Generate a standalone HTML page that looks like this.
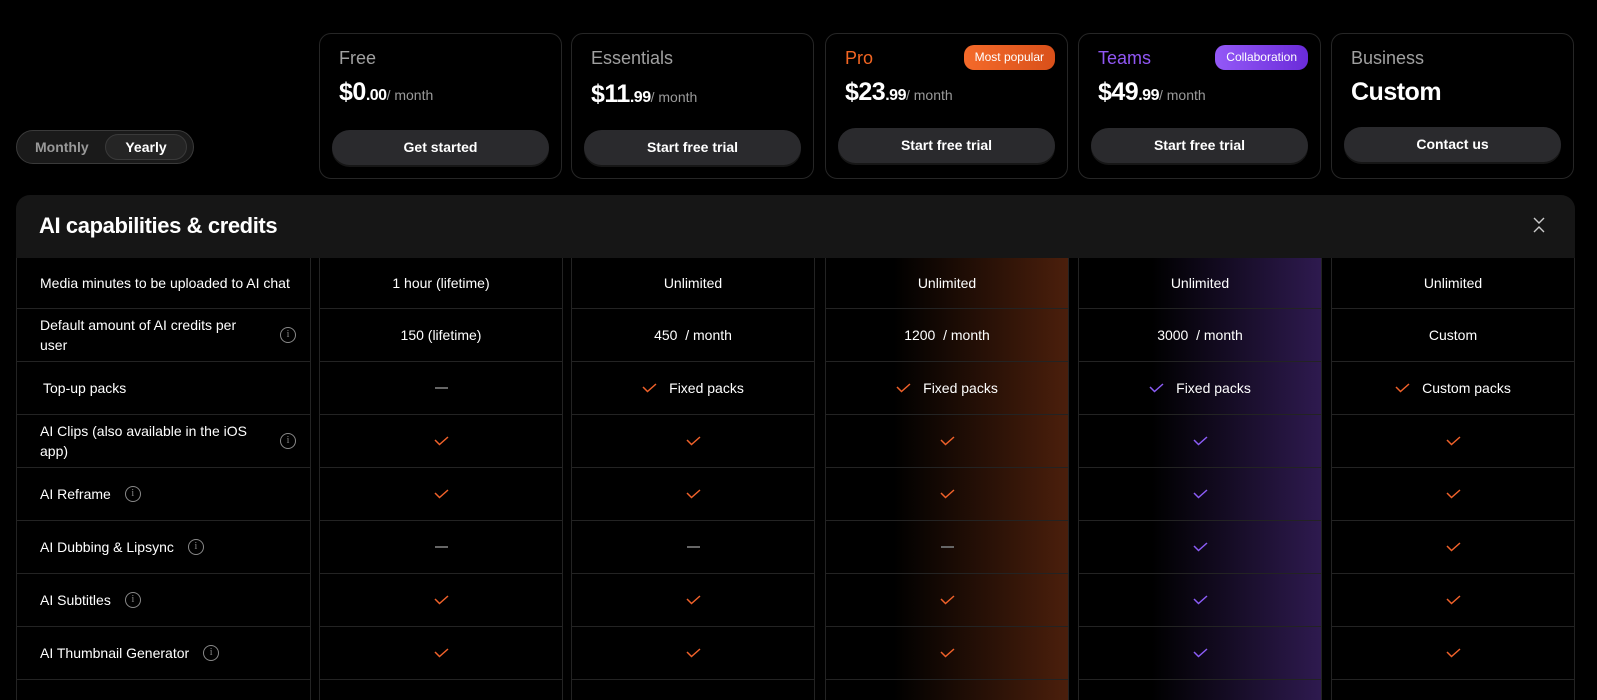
<!DOCTYPE html>
<html><head><meta charset="utf-8"><style>
*{box-sizing:border-box;margin:0;padding:0}
body{width:1597px;height:700px;background:#000;overflow:hidden;font-family:"Liberation Sans",sans-serif;color:#fff;position:relative}
.card{position:absolute;top:33px;width:243px;height:146px;border:1px solid #262626;border-radius:12px;background:#000}
.nm{position:absolute;left:19px;top:14px;font-size:18px;color:#a0a0a0}
.pr{position:absolute;left:19px;top:44px;font-size:25px;font-weight:bold;letter-spacing:-0.5px}
.pr small{font-size:16px}
.pr span{font-size:14px;font-weight:normal;color:#9a9a9a;letter-spacing:0}
.btn{position:absolute;left:12px;right:12px;top:96px;height:35px;border-radius:18px;background:#2a2a2d;font-size:14px;font-weight:bold;text-align:center;line-height:35px;box-shadow:0 2px 0 #161616}
.badge{position:absolute;right:12px;top:11px;height:25px;border-radius:10px;font-size:12px;padding:0 11px;line-height:25px}
.toggle{position:absolute;left:16px;top:130px;width:178px;height:34px;border:1px solid #3a3a3a;border-radius:17px;background:#1a1a1a}
.toggle .m{position:absolute;left:18px;top:8px;font-size:14px;color:#999;font-weight:bold}
.toggle .y{position:absolute;left:88px;top:3px;width:82px;height:26px;border:1px solid #3a3a3a;border-radius:14px;background:#252525;font-size:14px;font-weight:bold;text-align:center;line-height:24px}
.sec{position:absolute;left:16px;top:195px;width:1559px;height:63px;background:#161616;border-radius:14px 14px 0 0}
.sec h2{position:absolute;left:23px;top:18px;font-size:22px;font-weight:bold;letter-spacing:-0.4px}
.col{position:absolute;top:258px;height:442px;border-left:1px solid #232323;border-right:1px solid #232323}
.cell{position:absolute;left:0;right:0;border-bottom:1px solid #232323;display:flex;align-items:center;justify-content:center;font-size:14px}
.lab .cell{justify-content:flex-start;padding-left:23px;padding-right:14px}
.info{display:inline-block;width:16px;height:16px;border:1.3px solid #888;border-radius:50%;font-size:10px;color:#888;text-align:center;line-height:13px;font-family:"Liberation Serif",serif;margin-left:14px;flex:none}
.sp{margin-left:auto}
.dash{width:13px;height:1.5px;background:#666}
svg{display:block}
</style></head><body>

<div class="toggle"><div class="m">Monthly</div><div class="y">Yearly</div></div>

<div class="card" style="left:319px"><div class="nm">Free</div><div class="pr">$0<small>.00</small><span>/ month</span></div><div class="btn">Get started</div></div>
<div class="card" style="left:571px"><div class="nm">Essentials</div><div class="pr" style="top:46px">$11<small>.99</small><span>/ month</span></div><div class="btn">Start free trial</div></div>
<div class="card" style="left:825px"><div class="nm" style="color:#f26522">Pro</div><div class="badge" style="background:linear-gradient(90deg,#f46a2a,#d9501a)">Most popular</div><div class="pr">$23<small>.99</small><span>/ month</span></div><div class="btn" style="top:94px">Start free trial</div></div>
<div class="card" style="left:1078px"><div class="nm" style="color:#9157f5">Teams</div><div class="badge" style="background:linear-gradient(90deg,#9459f7,#6a2bd9)">Collaboration</div><div class="pr">$49<small>.99</small><span>/ month</span></div><div class="btn" style="top:94px">Start free trial</div></div>
<div class="card" style="left:1331px"><div class="nm">Business</div><div class="pr">Custom</div><div class="btn" style="top:93px">Contact us</div></div>

<div class="sec"><h2>AI capabilities &amp; credits</h2>
<svg style="position:absolute;right:28px;top:21px" width="16" height="20" viewBox="0 0 16 20"><path d="M3 2l5 5 5-5M3 16l5-5 5 5" stroke="#ccc" stroke-width="1.4" fill="none"/></svg></div>

<div class="col lab" style="left:16px;width:295px">
<div class="cell" style="top:0;height:51px">Media minutes to be uploaded to AI chat</div>
<div class="cell" style="top:51px;height:53px;line-height:20px"><span>Default amount of AI credits per<br>user</span><span class="info sp">i</span></div>
<div class="cell" style="top:104px;height:53px;padding-left:26px">Top-up packs</div>
<div class="cell" style="top:157px;height:53px;line-height:20px"><span>AI Clips (also available in the iOS<br>app)</span><span class="info sp">i</span></div>
<div class="cell" style="top:210px;height:53px">AI Reframe<span class="info">i</span></div>
<div class="cell" style="top:263px;height:53px">AI Dubbing &amp; Lipsync<span class="info">i</span></div>
<div class="cell" style="top:316px;height:53px">AI Subtitles<span class="info">i</span></div>
<div class="cell" style="top:369px;height:53px">AI Thumbnail Generator<span class="info">i</span></div>
</div>

<div id="cols"></div>
<script>
var O='#f0612a',P='#8b5cf6';
function ck(c){return '<svg width="15" height="10" viewBox="0 0 15 10"><path d="M1 4l4.5 4.5L14 1" stroke="'+c+'" stroke-width="1.5" fill="none"/></svg>'}
var D='<div class="dash"></div>';
var cols=[
 {x:319,c:O,bg:'',v:['1 hour (lifetime)','150 (lifetime)',D,1,1,D,1,1]},
 {x:571,c:O,bg:'',v:['Unlimited','450&nbsp; / month','F',1,1,D,1,1]},
 {x:825,c:O,bg:'linear-gradient(90deg,#000 28%,#4b1f0c)',v:['Unlimited','1200&nbsp; / month','F',1,1,D,1,1]},
 {x:1078,c:P,bg:'linear-gradient(90deg,#000 30%,#2e1a4f)',v:['Unlimited','3000&nbsp; / month','F',1,1,1,1,1]},
 {x:1331,c:O,bg:'',v:['Unlimited','Custom','C',1,1,1,1,1]}];
var h='',tops=[0,51,104,157,210,263,316,369,422];
cols.forEach(function(c){
 h+='<div class="col" style="left:'+c.x+'px;width:244px;background:'+(c.bg||'#000')+'">';
 c.v.forEach(function(v,i){
  var t=v===1?ck(c.c):v=='F'?ck(c.c)+'<span style="margin-left:12px">Fixed packs</span>':v=='C'?ck(O)+'<span style="margin-left:12px">Custom packs</span>':v;
  h+='<div class="cell" style="top:'+tops[i]+'px;height:'+(tops[i+1]-tops[i])+'px">'+t+'</div>';
 });
 h+='</div>';
});
document.getElementById('cols').innerHTML=h;
</script>
</body></html>
